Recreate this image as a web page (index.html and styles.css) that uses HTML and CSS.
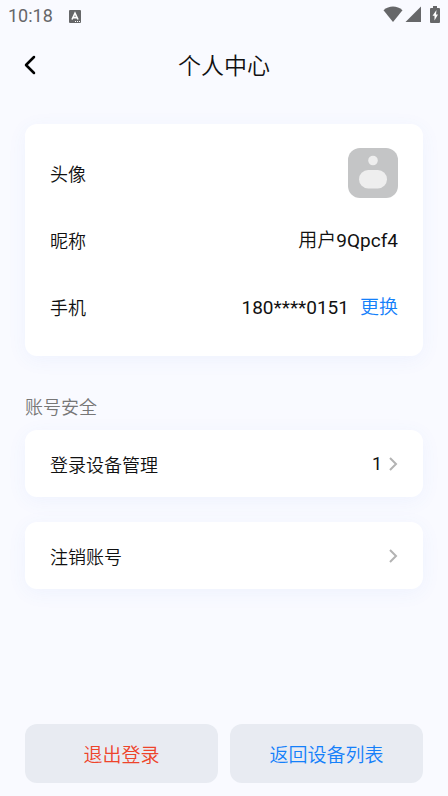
FILE: index.html
```html
<!DOCTYPE html>
<html lang="zh-CN">
<head>
<meta charset="utf-8">
<meta name="viewport" content="width=device-width, initial-scale=1">
<title>个人中心</title>
<link rel="stylesheet" href="styles.css">
</head>
<body>
<div class="status">
  <time>10:18</time>
  <svg class="status-app" width="12" height="13" viewBox="0 0 12 13" aria-hidden="true"><rect width="12" height="13" rx="1" fill="#666769"/><path d="M3 9.500 6 3.200 9 9.500M4.200 7.600h3.600" fill="none" stroke="#fff" stroke-width="1.600"/><path d="M6 11.500h1M8 11.500h1M10 11.500h1" stroke="#fff"/></svg>
  <div class="status-icons">
    <svg width="20" height="16" viewBox="0 0 20 16" aria-hidden="true"><path d="M.5 4.200C6-.6 14-.6 19.500 4.200L10 16Z" fill="#666769"/></svg>
    <svg width="16" height="16" viewBox="0 0 16 16" aria-hidden="true"><path d="M16 .5V16H.5Z" fill="#666769"/></svg>
    <svg class="battery" width="10" height="17" viewBox="0 0 10 17" aria-hidden="true"><path d="M3 0h4v2h2q1 0 1 1v13q0 1-1 1H1q-1 0-1-1V3q0-1 1-1h2Z" fill="#666769"/><path d="M6.500 4 2.500 9.800h2V14.500L8 8.500H6Z" fill="#fff"/></svg>
  </div>
</div>
<header class="header">
  <button class="back" type="button" aria-label="返回"><svg width="12" height="20" viewBox="0 0 12 20" aria-hidden="true"><path d="M10 2 2 10l8 8" fill="none" stroke="#000" stroke-width="2.500" stroke-linecap="round" stroke-linejoin="round"/></svg></button>
  <h1>个人中心</h1>
</header>
<main class="main">
  <section class="card profile">
    <div class="row"><span class="label">头像</span>
      <svg width="50" height="50" viewBox="0 0 50 50" aria-hidden="true"><rect width="50" height="50" rx="12" fill="#c4c5c6"/><circle cx="25" cy="12.500" r="4.800" fill="#eee"/><rect x="11" y="22" width="28" height="18.500" rx="9.200" fill="#eee"/></svg>
    </div>
    <div class="row"><span class="label">昵称</span><span class="value">用户<span class="latin">9Qpcf4</span></span></div>
    <div class="row"><span class="label">手机</span><span class="value"><span class="latin">180****0151</span><a href="#change">更换</a></span></div>
  </section>
  <h2>账号安全</h2>
  <a class="card item" href="#devices"><span class="label">登录设备管理</span><span class="end latin">1<svg width="9" height="14" viewBox="0 0 9 14" aria-hidden="true"><path d="m1 1 6 6-6 6" fill="none" stroke="#b3b3b3" stroke-width="2"/></svg></span></a>
  <a class="card item" href="#cancel"><span class="label">注销账号</span><span class="end"><svg width="9" height="14" viewBox="0 0 9 14" aria-hidden="true"><path d="m1 1 6 6-6 6" fill="none" stroke="#b3b3b3" stroke-width="2"/></svg></span></a>
</main>
<footer class="actions">
  <button class="logout" type="button">退出登录</button>
  <button class="devices" type="button">返回设备列表</button>
</footer>
</body>
</html>
```
FILE: styles.css
```css
* { box-sizing: border-box; }
body {
  display: flex;
  flex-direction: column;
  min-height: 100vh;
  margin: 0;
  background: #f9faff;
  color: #111;
  font-family: Roboto, "Noto Sans CJK SC", sans-serif;
  font-size: 18px;
  font-weight: 350;
  line-height: 24px;
}
a { color: inherit; text-decoration: none; }
button { border: 0; font: inherit; cursor: pointer; }
svg { display: block; flex: none; }
.status {
  display: flex;
  align-items: center;
  height: 32px;
  padding: 0 8px;
  color: #666769;
  font-weight: 400;
}
.latin { font-weight: 400; }
.status-app { margin-left: 16px; }
.status-icons { display: flex; align-items: center; gap: 2px; margin-left: auto; margin-bottom: 4px; }
.battery { margin-left: 7px; }
.header {
  display: grid;
  grid-template-columns: 48px 1fr 48px;
  align-items: center;
  height: 66px;
}
.back { padding: 0 0 0 24px; background: none; }
h1 {
  margin: 0;
  padding-top: 4px;
  font-size: 23px;
  font-weight: inherit;
  line-height: 32px;
  text-align: center;
}
.main { flex: 1; padding: 26px 25px; }
.card {
  border-radius: 12px;
  background: #fff;
  box-shadow: 0 4px 20px rgba(70, 120, 240, 0.06);
}
.profile { padding: 15px 25px 16px; }
.row {
  display: flex;
  align-items: center;
  justify-content: space-between;
  height: 67px;
}
.label { padding-top: 5px; }
.value { padding-top: 2px; font-size: 19px; }
.value a { margin-left: 11px; color: #1480fa; }
h2 {
  margin: 40px 0 10px;
  color: #777;
  font-size: 18px;
  font-weight: inherit;
  line-height: 24px;
}
.item {
  display: flex;
  align-items: center;
  justify-content: space-between;
  height: 67px;
  padding: 0 25px;
}
.item + .item { margin-top: 25px; }
.end { display: flex; align-items: center; gap: 7px; }
.actions {
  display: grid;
  grid-template-columns: 1fr 1fr;
  gap: 12px;
  padding: 0 25px 13px;
}
.actions button {
  height: 59px;
  padding: 5px 0 0;
  border-radius: 12px;
  background: #e8ebf2;
  font-size: 19px;
}
.actions .logout { color: #ee442b; }
.actions .devices { color: #1480fa; }
```
